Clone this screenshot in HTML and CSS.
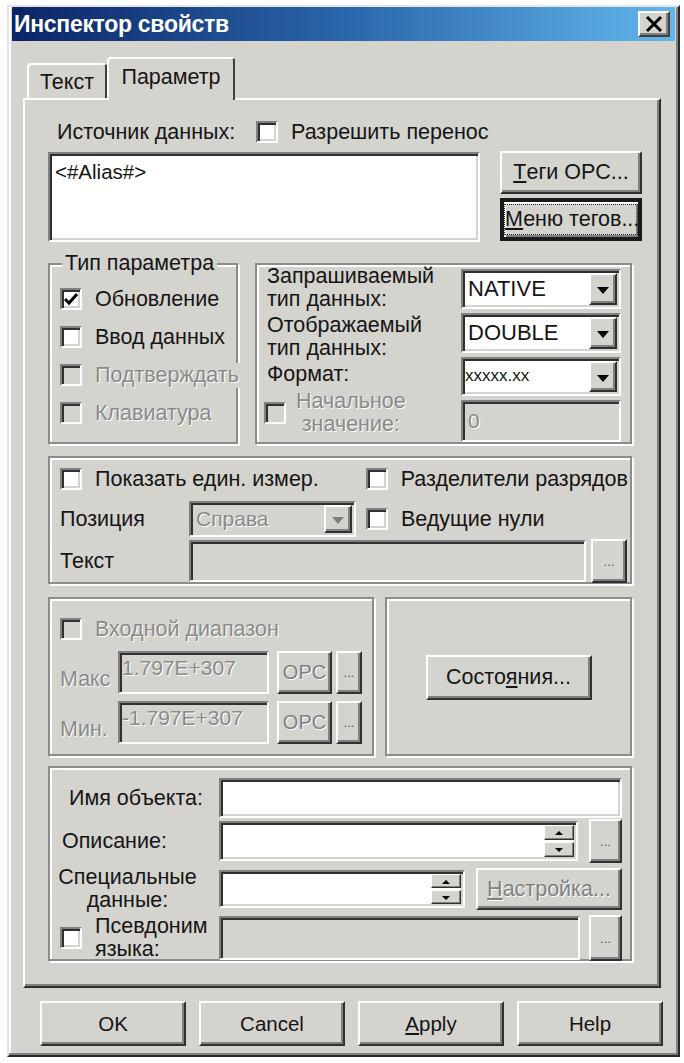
FILE: index.html
```html
<!DOCTYPE html>
<html lang="ru">
<head>
  <meta charset="UTF-8" />
  <title>Инспектор свойств</title>
  <link rel="stylesheet" href="styles.css">
</head>
<body>
  <div class="window">
    <!-- TITLE -->
    <div class="titlebar">
      <span class="title">Инспектор свойств</span>
      <span class="close-btn">
        <svg width="20" height="18" viewBox="0 0 20 18"><path d="M3 2 L17 16 M17 2 L3 16" stroke="#000" stroke-width="3" fill="none"/></svg>
      </span>
    </div>

    <!-- TABS -->
    <div class="tabs">
      <div class="tab">Текст</div>
      <div class="tab active">Параметр</div>
    </div>

    <div class="panel">
      <div class="row-source">
        <span class="src-lbl">Источник данных:</span>
        <div class="check"><span class="box"></span><span>Разрешить перенос</span></div>
      </div>

      <div class="row-alias">
        <div class="field alias-field">&lt;#Alias#&gt;</div>
        <div class="btn-col">
          <div class="btn"><u>Т</u>еги OPC...</div>
          <div class="btn default"><span class="focus"><u>М</u>еню тегов...</span></div>
        </div>
      </div>

      <!-- Тип параметра / типы данных -->
      <div class="row-types">
        <div class="group g-param">
          <span class="legend">Тип параметра</span>
          <div class="check"><span class="box checked"><svg width="14" height="13" viewBox="0 0 14 13"><path d="M1 6 L5 10 L13 1" stroke="#000" stroke-width="3" fill="none"/></svg></span><span>Обновление</span></div>
          <div class="check"><span class="box"></span><span>Ввод данных</span></div>
          <div class="check disabled"><span class="box"></span><span class="over">Подтверждать</span></div>
          <div class="check disabled"><span class="box"></span><span>Клавиатура</span></div>
        </div>

        <div class="group g-types">
          <div class="types-labels">
            <div class="lines">Запрашиваемый<br>тип данных:</div>
            <div class="lines">Отображаемый<br>тип данных:</div>
            <div class="lines">Формат:</div>
            <div class="check disabled init">
              <span class="box"></span>
              <span class="lines center">Начальное<br>значение:</span>
            </div>
          </div>
          <div class="types-combos">
            <div class="field combo"><span class="val">NATIVE</span><span class="arrow"></span></div>
            <div class="field combo"><span class="val">DOUBLE</span><span class="arrow"></span></div>
            <div class="field combo"><span class="val small">xxxxx.xx</span><span class="arrow"></span></div>
            <div class="field off init-field"><span class="val dis">0</span></div>
          </div>
        </div>
      </div>

      <!-- Единицы измерения -->
      <div class="group g-units">
        <div class="units-row">
          <div class="check units-show"><span class="box"></span><span>Показать един. измер.</span></div>
          <div class="check"><span class="box"></span><span class="over">Разделители разрядов</span></div>
        </div>
        <div class="units-row r2">
          <span class="units-lbl">Позиция</span>
          <div class="field off combo pos-combo"><span class="val dis">Справа</span><span class="arrow off"></span></div>
          <div class="check lead"><span class="box"></span><span>Ведущие нули</span></div>
        </div>
        <div class="units-row r3">
          <span class="units-lbl">Текст</span>
          <div class="field off unit-text"></div>
          <div class="btn dots">...</div>
        </div>
      </div>

      <!-- Диапазон / состояния -->
      <div class="row-range">
        <div class="group g-range">
          <div class="check disabled"><span class="box"></span><span>Входной диапазон</span></div>
          <div class="range-row first">
            <span class="range-lbl">Макс</span>
            <div class="field off range-field"><span class="val dis">1.797E+307</span></div>
            <div class="btn off opc">OPC</div>
            <div class="btn dots small-dots">...</div>
          </div>
          <div class="range-row">
            <span class="range-lbl">Мин.</span>
            <div class="field off range-field"><span class="val dis">-1.797E+307</span></div>
            <div class="btn off opc">OPC</div>
            <div class="btn dots small-dots">...</div>
          </div>
        </div>
        <div class="group g-states">
          <div class="btn states">Состо<u>я</u>ния...</div>
        </div>
      </div>

      <!-- Объект -->
      <div class="group g-object">
        <div class="obj-row">
          <span class="obj-lbl name-lbl">Имя объекта:</span>
          <div class="field obj-name"></div>
        </div>
        <div class="obj-row r2">
          <span class="obj-lbl">Описание:</span>
          <div class="field obj-desc"><span class="spin"><span class="up"></span><span class="down"></span></span></div>
          <div class="btn dots obj-dots">...</div>
        </div>
        <div class="obj-row r3">
          <span class="obj-lbl lines center spec-lbl">Специальные<br>данные:</span>
          <div class="field obj-spec"><span class="spin"><span class="up"></span><span class="down"></span></span></div>
          <div class="btn off setup"><u>Н</u>астройка...</div>
        </div>
        <div class="obj-row r4">
          <div class="check obj-lbl alias-check"><span class="box"></span><span class="lines">Псевдоним<br>языка:</span></div>
          <div class="field off obj-alias"></div>
          <div class="btn dots obj-dots">...</div>
        </div>
      </div>
    </div>

    <!-- Кнопки -->
    <div class="actions">
      <div class="btn action">OK</div>
      <div class="btn action">Cancel</div>
      <div class="btn action"><u>A</u>pply</div>
      <div class="btn action">Help</div>
    </div>
  </div>
</body>
</html>
```

FILE: styles.css
```css
* {
  box-sizing: border-box;
  margin: 0;
  padding: 0;
}

body {
  background: #fff;
  font-family: "Liberation Sans", Arial, sans-serif;
  font-size: 21.5px;
  color: #151515;
}

/*********JANELA***********/
.window {
  margin: 5px 0 0 7px;
  width: 673px;
  height: 1052px;
  background: #d4d3ce;
  border: 2px solid;
  border-color: #e6e5e1 #2a2a2a #2a2a2a #e6e5e1;
  box-shadow: inset -2px -2px 0 #808080, inset 2px 2px 0 #fff;
  padding: 0 3px;
}

.titlebar {
  height: 34px;
  background: linear-gradient(to right, #0b2566, #2a66aa 50%, #62b6ec);
  display: flex;
  align-items: center;
  justify-content: space-between;
  padding: 0 5px 0 2px;
}

.title {
  color: #fff;
  font-weight: bold;
  font-size: 23px;
  letter-spacing: -0.3px;
}

.close-btn {
  width: 32px;
  height: 26px;
  background: #d4d3ce;
  border: 2px solid;
  border-color: #fff #404040 #404040 #fff;
  box-shadow: inset -2px -2px 0 #808080;
  display: flex;
  align-items: center;
  justify-content: center;
}

/*********ABAS***********/
.tabs {
  display: flex;
  align-items: flex-end;
  margin: 16px 0 0 11px;
  height: 41px;
  position: relative;
  z-index: 1;
}

.tab {
  width: 80px;
  height: 35px;
  margin-left: 4px;
  border: 2px solid;
  border-bottom: none;
  border-color: #fff #404040 #fff #fff;
  border-radius: 4px 4px 0 0;
  display: flex;
  align-items: center;
  justify-content: center;
  padding-top: 2px;
}

.tab.active {
  width: 128px;
  height: 43px;
  margin: 0 0 -2px 0;
  background: #d4d3ce;
  padding-bottom: 6px;
}

.panel {
  margin-left: 11px;
  width: 638px;
  height: 890px;
  border: 2px solid;
  border-color: #fff #2f2f2f #2f2f2f #fff;
  box-shadow: inset -2px -2px 0 #808080;
  padding: 20px 0 0 23px;
}

/*********CONTROLES***********/
.field {
  background: #fff;
  border: 2px solid;
  border-color: #808080 #fff #fff #808080;
  box-shadow: inset 2px 2px 0 #303030, inset -2px -2px 0 #d4d3ce;
  position: relative;
}

.field.off {
  background: #d4d3ce;
}

.btn {
  background: #d4d3ce;
  border: 2px solid;
  border-color: #fff #303030 #303030 #fff;
  box-shadow: inset -2px -2px 0 #808080;
  display: flex;
  align-items: center;
  justify-content: center;
  white-space: nowrap;
}

.btn.off {
  color: #808080;
  text-shadow: 1px 1px 0 #fff;
}

.btn.default {
  border: 4px solid #1a1a1a;
  border-top-color: #1a1a1a;
  box-shadow: inset 2px 2px 0 #fff, inset -2px -2px 0 #808080;
}

.focus {
  border: 1px dotted #222;
  padding: 2px 0;
  margin: 0 4px;
  width: 100%;
  text-align: center;
}

.check {
  display: flex;
  align-items: center;
  gap: 13px;
  height: 24px;
  white-space: nowrap;
}

.box {
  width: 22px;
  height: 22px;
  flex: none;
  background: #fff;
  border: 2px solid;
  border-color: #808080 #fff #fff #808080;
  box-shadow: inset 2px 2px 0 #303030, inset -2px -2px 0 #d4d3ce;
  display: flex;
  align-items: center;
  justify-content: center;
}

.check.disabled {
  color: #8a8a8a;
  text-shadow: 1px 1px 0 #fff;
}

.check.disabled .box {
  background: #d4d3ce;
}

.over {
  background: #d4d3ce;
  position: relative;
  padding-right: 2px;
}

.lines {
  line-height: 23px;
}

.center {
  text-align: center;
}

.val {
  position: absolute;
  left: 5px;
  top: 50%;
  transform: translateY(-50%);
  font-size: 22px;
}

.val.small {
  font-size: 17px;
  left: 2px;
}

.val.dis {
  color: #8a8a8a;
  text-shadow: 1px 1px 0 #fff;
  font-size: 21px;
}

.arrow {
  position: absolute;
  right: 2px;
  top: 2px;
  bottom: 2px;
  width: 28px;
  background: #d4d3ce;
  border: 2px solid;
  border-color: #fff #303030 #303030 #fff;
  box-shadow: inset -2px -2px 0 #808080;
}

.arrow::after {
  content: "";
  position: absolute;
  left: 6px;
  top: 12px;
  border-left: 6px solid transparent;
  border-right: 6px solid transparent;
  border-top: 7px solid #000;
}

.arrow.off::after {
  border-top-color: #808080;
}

.group {
  position: relative;
  border: 2px solid #8c8c8c;
  box-shadow: inset 2px 2px 0 #fff, 2px 2px 0 #fff;
}

.legend {
  position: absolute;
  left: 12px;
  top: -13px;
  padding: 0 3px;
  background: #d4d3ce;
  line-height: 22px;
}

/*********FONTE DE DADOS***********/
.row-source {
  display: flex;
  align-items: center;
  height: 24px;
}

.src-lbl {
  margin-left: 9px;
  width: 199px;
}

.row-alias {
  display: flex;
  margin-top: 7px;
}

.alias-field {
  width: 432px;
  height: 90px;
  margin-top: 1px;
  padding: 6px 5px;
  font-size: 20.5px;
}

.btn-col {
  display: flex;
  flex-direction: column;
  gap: 4px;
  margin-left: 20px;
  width: 142px;
}

.btn-col .btn {
  height: 43px;
}

/*********TIPOS***********/
.row-types {
  display: flex;
  gap: 17px;
  margin-top: 21px;
}

.g-param {
  width: 190px;
  height: 181px;
  padding: 22px 0 0 10px;
  display: flex;
  flex-direction: column;
  gap: 14px;
}

.g-types {
  width: 377px;
  height: 181px;
  display: flex;
  padding: 4px 0 0 10px;
}

.types-labels {
  width: 194px;
  margin-top: -4px;
  display: flex;
  flex-direction: column;
  gap: 3px;
}

.check.init {
  height: 48px;
  margin: 0 0 0 -3px;
  gap: 10px;
}

.types-combos {
  width: 160px;
  display: flex;
  flex-direction: column;
  gap: 4px;
}

.combo {
  height: 40px;
}

.init-field {
  height: 42px;
}

/*********UNIDADES***********/
.g-units {
  margin-top: 12px;
  width: 584px;
  height: 128px;
  padding: 9px 0 0 10px;
}

.units-row {
  display: flex;
  align-items: center;
}

.units-show {
  width: 306px;
}

.units-row.r2 {
  margin-top: 10px;
}

.units-row.r3 {
  margin-top: 2px;
}

.units-lbl {
  width: 129px;
}

.pos-combo {
  width: 167px;
  height: 36px;
}

.pos-combo .arrow::after {
  top: 10px;
}

.lead {
  margin-left: 10px;
}

.unit-text {
  width: 397px;
  height: 42px;
}

.dots {
  font-size: 13px;
  color: #555;
}

.units-row .dots {
  width: 36px;
  height: 44px;
  margin-left: 5px;
}

/*********DIAPAZON***********/
.row-range {
  display: flex;
  gap: 11px;
  margin-top: 13px;
}

.g-range {
  width: 326px;
  height: 159px;
  padding: 18px 0 0 10px;
}

.range-row {
  display: flex;
  align-items: center;
  margin-top: 7px;
}

.range-row.first {
  margin-top: 10px;
}

.range-lbl {
  width: 58px;
  color: #8a8a8a;
  text-shadow: 1px 1px 0 #fff;
  padding-top: 14px;
}

.range-field {
  width: 151px;
  height: 43px;
}

.range-field .val {
  top: 3px;
  transform: none;
  left: 2px;
}

.opc {
  width: 55px;
  height: 43px;
  margin-left: 8px;
  font-size: 20px;
}

.small-dots {
  width: 26px;
  height: 43px;
  margin-left: 4px;
}

.g-states {
  width: 247px;
  height: 159px;
  display: flex;
  align-items: center;
  justify-content: center;
}

.states {
  width: 166px;
  height: 45px;
  margin-top: 2px;
}

/*********OBJETO***********/
.g-object {
  margin-top: 10px;
  width: 584px;
  height: 195px;
  padding: 10px 0 0 0;
}

.obj-row {
  display: flex;
  align-items: center;
}

.obj-lbl {
  width: 169px;
  padding-left: 12px;
  flex: none;
}

.name-lbl {
  text-align: right;
  padding-right: 16px;
}

.obj-name {
  width: 403px;
  height: 40px;
}

.obj-row.r2 {
  margin-top: 1px;
}

.obj-desc {
  width: 359px;
  height: 40px;
}

.obj-dots {
  width: 33px;
  height: 44px;
  margin-left: 11px;
}

.obj-row.r3 {
  margin-top: 3px;
}

.spec-lbl {
  padding-left: 0;
  padding-right: 14px;
}

.obj-spec {
  width: 246px;
  height: 38px;
}

.setup {
  width: 146px;
  height: 42px;
  margin-left: 11px;
}

.obj-row.r4 {
  margin-top: 2px;
}

.alias-check {
  height: 48px;
  padding-left: 10px;
  align-items: center;
}

.obj-alias {
  width: 361px;
  height: 44px;
}

.r4 .obj-dots {
  margin-left: 9px;
  height: 46px;
}

.spin {
  position: absolute;
  right: 2px;
  top: 2px;
  bottom: 2px;
  width: 30px;
  display: flex;
  flex-direction: column;
  gap: 2px;
}

.spin span {
  flex: 1;
  position: relative;
  background: #d4d3ce;
  border: 1px solid;
  border-color: #fff #303030 #303030 #fff;
  box-shadow: inset -1px -1px 0 #808080;
}

.spin span::after {
  content: "";
  position: absolute;
  left: 10px;
  top: 5px;
  border-left: 4px solid transparent;
  border-right: 4px solid transparent;
}

.spin .up::after {
  border-bottom: 4px solid #000;
}

.spin .down::after {
  border-top: 4px solid #000;
}

/*********BOTOES***********/
.actions {
  display: flex;
  gap: 13px;
  margin: 13px 0 0 28px;
}

.action {
  width: 146px;
  height: 45px;
  font-size: 20.5px;
}
```
